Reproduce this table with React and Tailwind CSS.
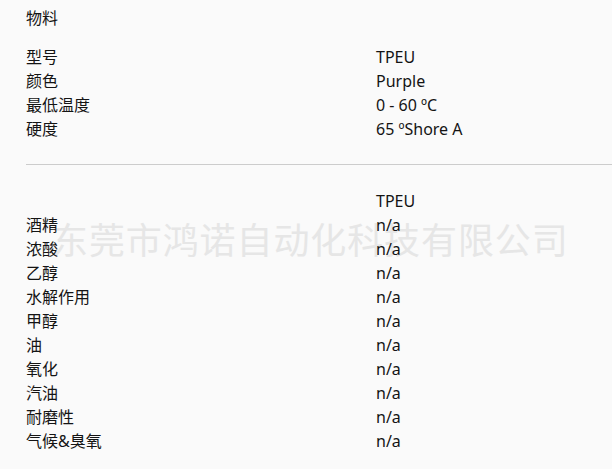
export default function App() {
  const spec = [
    ["型号", "TPEU"],
    ["颜色", "Purple"],
    ["最低温度", "0 - 60 ºC"],
    ["硬度", "65 ºShore A"],
  ];
  const res = [
    ["酒精", "n/a"],
    ["浓酸", "n/a"],
    ["乙醇", "n/a"],
    ["水解作用", "n/a"],
    ["甲醇", "n/a"],
    ["油", "n/a"],
    ["氧化", "n/a"],
    ["汽油", "n/a"],
    ["耐磨性", "n/a"],
    ["气候&臭氧", "n/a"],
  ];
  const font = { fontFamily: '"Noto Sans", "Noto Sans CJK SC", sans-serif' };
  return (
    <div
      className="relative w-[612px] h-[469px] overflow-hidden bg-[#fafafa] text-[#141414] text-[16px] leading-[24px]"
      style={font}
    >
      <div className="pointer-events-none absolute left-[52px] top-[221px] text-[36px] leading-[40px] tracking-[0.9px] text-[#e6e6e6] whitespace-nowrap">
        东莞市鸿诺自动化科技有限公司
      </div>
      <div className="relative pt-[6px] pl-[26px]">
        <div className="h-6">物料</div>
        <div className="mt-[15px] grid grid-cols-[350px_1fr]">
          {spec.map(([a, b]) => (
            <div key={a} className="contents">
              <div className="h-6">{a}</div>
              <div className="h-6">{b}</div>
            </div>
          ))}
        </div>
        <div className="mt-[23px] h-px bg-[#cccccc]"></div>
        <div className="mt-6 grid grid-cols-[350px_1fr]">
          <div className="h-6"></div>
          <div className="h-6">TPEU</div>
          {res.map(([a, b]) => (
            <div key={a} className="contents">
              <div className="h-6">{a}</div>
              <div className="h-6">{b}</div>
            </div>
          ))}
        </div>
      </div>
    </div>
  );
}
